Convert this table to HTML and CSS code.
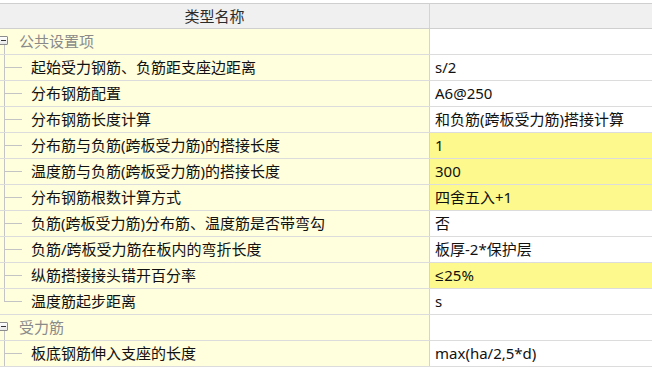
FILE: index.html
```html
<!DOCTYPE html>
<html lang="zh">
<head>
<meta charset="utf-8">
<link rel="stylesheet" href="styles.css">
</head>
<body>
<div class="grid">
  <div class="row head">
    <div class="name">类型名称</div>
    <div class="val"></div>
  </div>
  <div class="row">
    <div class="name group"><span class="box has-kids"></span><span class="glabel">公共设置项</span></div>
    <div class="val"></div>
  </div>
  <div class="row">
    <div class="name"><span class="branch"></span>起始受力钢筋、负筋距支座边距离</div>
    <div class="val">s/2</div>
  </div>
  <div class="row">
    <div class="name"><span class="branch"></span>分布钢筋配置</div>
    <div class="val">A6@250</div>
  </div>
  <div class="row">
    <div class="name"><span class="branch"></span>分布钢筋长度计算</div>
    <div class="val">和负筋(跨板受力筋)搭接计算</div>
  </div>
  <div class="row">
    <div class="name"><span class="branch"></span>分布筋与负筋(跨板受力筋)的搭接长度</div>
    <div class="val hl">1</div>
  </div>
  <div class="row">
    <div class="name"><span class="branch"></span>温度筋与负筋(跨板受力筋)的搭接长度</div>
    <div class="val hl">300</div>
  </div>
  <div class="row">
    <div class="name"><span class="branch"></span>分布钢筋根数计算方式</div>
    <div class="val hl">四舍五入+1</div>
  </div>
  <div class="row">
    <div class="name"><span class="branch"></span>负筋(跨板受力筋)分布筋、温度筋是否带弯勾</div>
    <div class="val">否</div>
  </div>
  <div class="row">
    <div class="name"><span class="branch"></span>负筋/跨板受力筋在板内的弯折长度</div>
    <div class="val">板厚-2*保护层</div>
  </div>
  <div class="row">
    <div class="name"><span class="branch"></span>纵筋搭接接头错开百分率</div>
    <div class="val hl"><span class="sym">≤</span>25%</div>
  </div>
  <div class="row">
    <div class="name"><span class="branch last"></span>温度筋起步距离</div>
    <div class="val">s</div>
  </div>
  <div class="row">
    <div class="name group"><span class="box has-kids"></span><span class="glabel">受力筋</span></div>
    <div class="val"></div>
  </div>
  <div class="row">
    <div class="name"><span class="branch"></span>板底钢筋伸入支座的长度</div>
    <div class="val">max(ha/2,5*d)</div>
  </div>
</div>
</body>
</html>
```

FILE: styles.css
```css
html, body {
  margin: 0;
  padding: 0;
  background: #ffffff;
  overflow: hidden;
}
body {
  padding-top: 3px;
  font-family: "Noto Sans", "Noto Sans CJK SC", sans-serif;
  font-size: 15px;
  color: #111111;
}
.grid {
  display: flex;
  flex-direction: column;
  width: 652px;
}
.row {
  display: grid;
  grid-template-columns: 430px 1fr;
  height: 26px;
  box-sizing: border-box;
  border-bottom: 1px solid #dcdcdc;
}
.row.head {
  border-top: 1px solid #cfcfcf;
  border-bottom: 1px solid #cfcfcf;
  background: #f0f0f0;
  height: 26px;
}
.row.head .name {
  background: #f0f0f0;
  justify-content: center;
  color: #2b2b2b;
  border-right: 1px solid #d4d4d4;
}
.row.head .val {
  background: #f0f0f0;
}
.name {
  display: flex;
  align-items: center;
  background: #fffedd;
  border-right: 1px solid #d4d4d4;
  white-space: nowrap;
  overflow: hidden;
  line-height: 25px;
}
.val {
  display: flex;
  align-items: center;
  padding-left: 5px;
  background: #ffffff;
  white-space: nowrap;
  overflow: hidden;
  line-height: 25px;
}
.val.hl {
  background: #fdf98c;
}
.sym {
  font-family: "Liberation Sans", "DejaVu Sans", sans-serif;
  margin-right: 1px;
}
.branch {
  position: relative;
  flex: 0 0 31px;
  align-self: stretch;
}
.branch::before {
  content: "";
  position: absolute;
  left: 4px;
  top: -1px;
  bottom: -1px;
  border-left: 1px solid #c4c4c4;
}
.branch.last::before {
  bottom: 12px;
}
.branch::after {
  content: "";
  position: absolute;
  left: 5px;
  width: 17px;
  top: 12px;
  border-top: 1px solid #c4c4c4;
}
.group {
  color: #8a8a8a;
}
.box {
  position: relative;
  flex: 0 0 19px;
  align-self: stretch;
}
.box::before {
  content: "";
  position: absolute;
  left: -1px;
  top: 7px;
  width: 7px;
  height: 7px;
  border: 1px solid #8c8c8c;
  border-radius: 1px;
  background: linear-gradient(#ffffff, #e8e8e8);
}
.box::after {
  content: "";
  position: absolute;
  left: 1px;
  top: 11px;
  width: 5px;
  border-top: 1px solid #333;
}
.box.has-kids {
  background: linear-gradient(#c4c4c4, #c4c4c4) 4px 16px / 1px 10px no-repeat;
}
.glabel {
  color: #8a8a8a;
}
```
